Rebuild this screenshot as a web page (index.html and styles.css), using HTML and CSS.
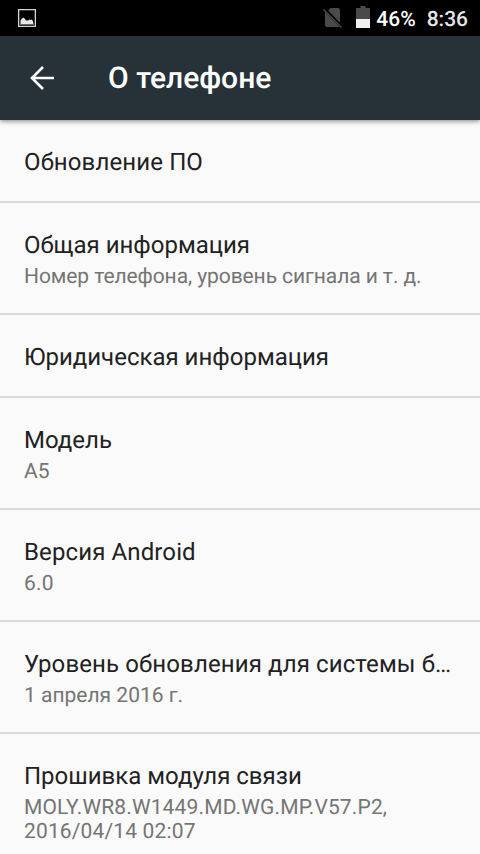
FILE: index.html
```html
<!DOCTYPE html>
<html lang="ru">
<head>
<meta charset="utf-8">
<title>О телефоне</title>
<link rel="stylesheet" href="styles.css">
</head>
<body>
<div class="status">
  <svg class="picture" width="18" height="18" viewBox="0 0 18 18"><path fill="none" stroke="#d0d4d4" stroke-width="1.300" d="M.65.65h16.700v16.700H.65z"/><path fill="#e8e8e8" d="M2.500 15v-3.500l1-1.500 2-1.500 1.500 1.500 1 1.500h2l1.500-1 1 .5 1-.5 1.500 1.500.5 3z"/><path fill="#666" d="M2 15h14v1H2z"/></svg>
  <svg class="nosim" width="19" height="20" viewBox="0 0 19 20"><path fill="#4a4a4a" d="M7.500 0H15q2 0 2 2v13.500L5 3zM2 4l14.500 15H4q-2 0-2-2z"/><path stroke="#000" stroke-width="1.500" d="M1.500 0l18 18.500"/><path stroke="#4a4a4a" stroke-width="1.500" d="M.5 1.500l18 18"/></svg>
  <svg class="battery" width="14" height="22" viewBox="0 0 14 22"><path fill="#4a4a4a" d="M4.500 0h5v2H14v11H0V2h4.500z"/><path fill="#f0f0f0" d="M0 13h14v9H0z"/></svg>
  <span class="percent">46%</span>
  <span class="clock">8:36</span>
</div>
<header class="toolbar">
  <svg class="back" width="24" height="24" viewBox="0 0 24 24"><path fill="none" stroke="#fff" stroke-width="2.600" d="M24 12H2M13 1L2 12l11 11"/></svg>
  <h1>О телефоне</h1>
</header>
<main>
  <section class="row"><h2 class="loose">Обновление ПО</h2></section>
  <section class="row"><h2>Общая информация</h2><p class="tight">Номер телефона, уровень сигнала и т. д.</p></section>
  <section class="row"><h2>Юридическая информация</h2></section>
  <section class="row"><h2>Модель</h2><p>A5</p></section>
  <section class="row"><h2 class="loose">Версия Android</h2><p class="loose">6.0</p></section>
  <section class="row"><h2 class="loose">Уровень обновления для системы б…</h2><p>1 апреля 2016 г.</p></section>
  <section class="row"><h2>Прошивка модуля связи</h2><p class="loose">MOLY.WR8.W1449.MD.WG.MP.V57.P2, 2016/04/14 02:07</p></section>
</main>
</body>
</html>
```
FILE: styles.css
```css
* { box-sizing: border-box; }
body { margin: 0; height: 854px; overflow: hidden; display: flex; flex-direction: column; background: #fafafa; font-family: Roboto, sans-serif; color: #212121; text-rendering: geometricPrecision; }
.status { height: 36px; flex: none; display: flex; align-items: center; background: #000; color: #e6e6e6; padding: 0 12px 0 18px; font-size: 21px; line-height: 24px; font-weight: 500; }
.nosim { margin-left: auto; }
.battery { margin: 0 0 2px 14px; }
.percent { margin: 3px 0 0 6px; color: #fff; }
.clock { margin: 3px 0 0 11px; }
.toolbar { height: 84px; flex: none; display: flex; align-items: center; padding-left: 30px; background: #263238; color: #fff; box-shadow: 0 1px 5px rgba(0,0,0,.5); z-index: 1; }
h1 { margin: 2px 0 0 54px; font-size: 30px; line-height: 36px; font-weight: 500; }
main { flex: none; }
.row { padding: 25px 24px 21px; border-bottom: 2px solid #dadada; }
h2 { margin: 0; font-size: 24px; line-height: 35px; font-weight: 400; white-space: nowrap; }
p { margin: 2px 0 3px; font-size: 21px; line-height: 24px; color: #757575; }
h2.loose { letter-spacing: .12px; }
p.loose { letter-spacing: .15px; }
.tight { letter-spacing: -.08px; }
```
